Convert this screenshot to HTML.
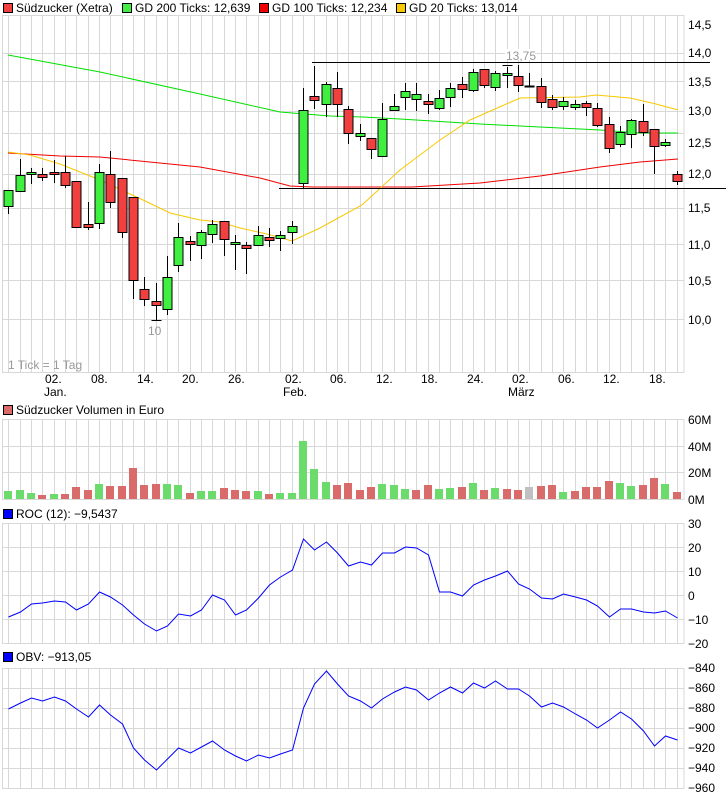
<!DOCTYPE html>
<html><head><meta charset="utf-8"><style>
html,body{margin:0;padding:0;background:#fff;width:726px;height:796px;overflow:hidden}
svg{display:block}
text{font-family:"Liberation Sans",sans-serif;font-size:12px;fill:#000}
.g{fill:#999}
</style></head><body>
<svg id="s" width="726" height="796" xmlns="http://www.w3.org/2000/svg">
<g id="grid" stroke="#d8d8d8" stroke-width="1" fill="none"></g>
<g id="ma" fill="none" stroke-width="1"></g>
<g id="cand" stroke="#000" stroke-width="1"></g>
<g id="vol"></g>
<g id="lines" fill="none" stroke="#0000ff" stroke-width="1"></g>
<!-- legend -->
<rect x="3.5" y="3.5" width="9" height="9" fill="#f04040" stroke="#000"/>
<text x="16" y="12">Südzucker (Xetra)</text>
<rect x="122.5" y="3.5" width="9" height="9" fill="#40f040" stroke="#000"/>
<text x="135" y="12">GD 200 Ticks: 12,639</text>
<rect x="259.5" y="3.5" width="9" height="9" fill="#f00000" stroke="#000"/>
<text x="272" y="12">GD 100 Ticks: 12,234</text>
<rect x="396.5" y="3.5" width="9" height="9" fill="#f8c800" stroke="#000"/>
<text x="409" y="12">GD 20 Ticks: 13,014</text>
<!-- price axis -->
<text x="688" y="29">14,5</text>
<text x="688" y="57">14,0</text>
<text x="688" y="86">13,5</text>
<text x="688" y="115">13,0</text>
<text x="688" y="147">12,5</text>
<text x="688" y="178">12,0</text>
<text x="688" y="212">11,5</text>
<text x="688" y="249">11,0</text>
<text x="688" y="285">10,5</text>
<text x="688" y="324">10,0</text>
<rect x="505" y="49" width="30" height="11" fill="#fff"/>
<text x="506" y="60" class="g">13,75</text>
<text x="148" y="335" class="g">10</text>
<text x="8" y="369" class="g">1 Tick = 1 Tag</text>
<!-- dates -->
<text x="45" y="383">02.</text><text x="44" y="396">Jan.</text>
<text x="91" y="383">08.</text>
<text x="137" y="383">14.</text>
<text x="182" y="383">20.</text>
<text x="228" y="383">26.</text>
<text x="285" y="383">02.</text><text x="283" y="396">Feb.</text>
<text x="330" y="383">06.</text>
<text x="376" y="383">12.</text>
<text x="421" y="383">18.</text>
<text x="467" y="383">24.</text>
<text x="512" y="383">02.</text><text x="508" y="396">März</text>
<text x="558" y="383">06.</text>
<text x="603" y="383">12.</text>
<text x="649" y="383">18.</text>
<!-- volume -->
<rect x="3.5" y="405.5" width="9" height="9" fill="#d96b6b" stroke="#000"/>
<text x="16" y="414">Südzucker Volumen in Euro</text>
<text x="688" y="424">60M</text>
<text x="688" y="451">40M</text>
<text x="688" y="477">20M</text>
<text x="688" y="504">0M</text>
<!-- ROC -->
<rect x="3.5" y="509.5" width="9" height="9" fill="#0000ff" stroke="#000"/>
<text x="16" y="518">ROC (12): −9,5437</text>
<text x="688" y="528">30</text>
<text x="688" y="552">20</text>
<text x="688" y="576">10</text>
<text x="688" y="600">0</text>
<text x="688" y="624">−10</text>
<text x="688" y="648">−20</text>
<!-- OBV -->
<rect x="3.5" y="652.5" width="9" height="9" fill="#0000ff" stroke="#000"/>
<text x="16" y="661">OBV: −913,05</text>
<text x="688" y="672">−840</text>
<text x="688" y="692">−860</text>
<text x="688" y="712">−880</text>
<text x="688" y="732">−900</text>
<text x="688" y="752">−920</text>
<text x="688" y="772">−940</text>
<text x="688" y="792">−960</text>
</svg>
<script>
const NS="http://www.w3.org/2000/svg";
function el(p,t,a){const e=document.createElementNS(NS,t);for(const k in a)e.setAttribute(k,a[k]);document.getElementById(p).appendChild(e);return e;}
const X=i=>Math.round(8.3+11.33*i)+0.5;
// grid
function panel(t,b,hs){
 el("grid","rect",{x:2.5,y:t+.5,width:681.5,height:b-t});
 for(let i=0;i<60;i++)el("grid","line",{x1:X(i),y1:t,x2:X(i),y2:b});
 hs.forEach(y=>el("grid","line",{x1:2,y1:y+.5,x2:684,y2:y+.5}));
}
panel(15,372,[53,81,111,133,174,208,244,280,319]);
panel(419,499,[446,472]);
panel(523,643,[547,571,595,619]);
panel(668,788,[688,708,728,748,768]);
// MAs
function pl(g,pts,c){el(g,"polyline",{points:pts.map(p=>p.join(",")).join(" "),stroke:c});}
pl("ma",[[8,55],[100,72],[200,94],[280,112],[330,116],[363,117],[400,119],[480,124],[540,127],[600,130],[640,133],[678,133]],"#00e000");
pl("ma",[[8,153],[60,156],[100,157],[200,167],[260,178],[290,186],[312,187],[412,187],[480,183],[540,176],[600,167],[640,162],[678,159]],"#f00000");
pl("ma",[[8,152],[30,155],[60,164],[100,180],[143,200],[170,213],[200,220],[220,222],[240,228],[267,234],[292,241],[320,228],[362,205],[400,170],[440,140],[470,120],[520,98],[580,97],[596,95],[630,98],[656,104],[678,110]],"#f8c800");
// support/resistance
el("cand","line",{x1:312,y1:62.5,x2:710,y2:62.5});
el("cand","line",{x1:279,y1:188.5,x2:726,y2:188.5});
// candles [color(g/r), bodyTop, bodyBot, wickTop, wickBot]
const C=[["g",190,206,190,214],["g",175,191,159,191],["g",172,174,168,184],["r",174,177,168,181],["r",172,174,160,183],["r",172,185,156,188],["r",181,227,181,228],["r",224,227,202,230],["g",172,223,164,229],["r",174,202,151,208],["r",178,232,178,238],["r",197,280,197,299],["r",289,299,277,306],["r",301,305,283,320],["g",277,309,256,315],["g",237,265,223,272],["r",241,244,236,261],["g",232,245,230,259],["g",224,234,220,243],["r",221,239,221,256],["g",242,244,235,270],["r",245,248,242,274],["g",235,245,226,245],["r",237,240,228,247],["g",235,238,231,251],["g",226,232,221,244],["g",110,183,88,188],["r",96,100,66,109],["g",84,104,82,117],["r",88,104,72,117],["r",109,133,106,144],["g",133,136,124,141],["r",138,149,138,159],["g",119,156,103,156],["g",106,110,94,111],["g",91,97,83,110],["g",94,99,83,111],["r",101,104,94,114],["g",98,108,90,110],["g",88,97,83,107],["r",84,89,77,98],["g",72,90,69,92],["r",69,85,69,88],["g",73,87,71,91],["g",73,75,67,88],["r",76,85,65,92],["d",86,86,73,86],["r",86,102,78,108],["r",99,107,95,110],["g",101,106,97,110],["g",104,107,100,110],["r",103,107,101,116],["r",108,125,103,127],["r",124,148,117,153],["g",132,144,126,147],["g",120,134,119,148],["r",121,132,104,136],["r",129,146,129,174],["g",142,145,139,147],["r",174,181,171,185]];
C.forEach((c,i)=>{const x=X(i);
 el("cand","line",{x1:x,y1:c[3],x2:x,y2:c[4]});
 if(c[0]=="d"){el("cand","line",{x1:x-5,y1:c[1]+.5,x2:x+5,y2:c[1]+.5,"stroke-width":2});return;}
 el("cand","rect",{x:x-4.5,y:c[1]+.5,width:9,height:Math.max(2,c[2]-c[1]),fill:c[0]=="g"?"#40f040":"#f04040"});
});
el("cand","line",{x1:X(13)-5,y1:320.5,x2:X(13)+5,y2:320.5});
el("cand","line",{x1:X(44)-5,y1:65.5,x2:X(44)+5,y2:65.5});
// volume
const V="g491 g490 g493 r495 g494 r494 r487 r490 g484 r486 r486 r468 r485 r484 g484 g485 r493 g491 g491 r488 r490 r491 g491 r494 g493 g493 g441 g469 g482 r485 r483 r490 r487 g484 g485 g489 r490 r485 g489 g488 r487 g483 r490 g488 r489 r490 y487 r486 r485 g492 r491 r487 r487 r481 g483 g486 r485 r478 g484 r492".split(" ");
V.forEach((v,i)=>{const t=+v.slice(1);el("vol","rect",{x:X(i)-4.5,y:t,width:8,height:499-t,fill:v[0]=="g"?"#6bdc6b":v[0]=="r"?"#d96b6b":"#c0c0c0"});});
// ROC
const R=[617,612,604,603,601,602,610,604,592,597,605,615,624,631,626,614,616,610,595,600,615,610,598,585,577,570,539,550,542,553,566,562,565,553,553,547,548,555,592,592,596,585,580,576,571,584,589,598,599,594,597,600,606,617,609,609,612,613,611,618];
pl("lines",R.map((y,i)=>[X(i),y]),"#0000ff");
const O=[709,703,698,701,697,701,709,717,705,715,724,748,760,770,759,748,753,747,741,750,756,761,755,758,754,750,708,684,671,684,696,701,708,699,692,687,690,700,693,687,693,683,688,681,689,689,696,707,703,707,714,720,728,720,712,719,731,746,736,740];
pl("lines",O.map((y,i)=>[X(i),y]),"#0000ff");
</script>
</body></html>
